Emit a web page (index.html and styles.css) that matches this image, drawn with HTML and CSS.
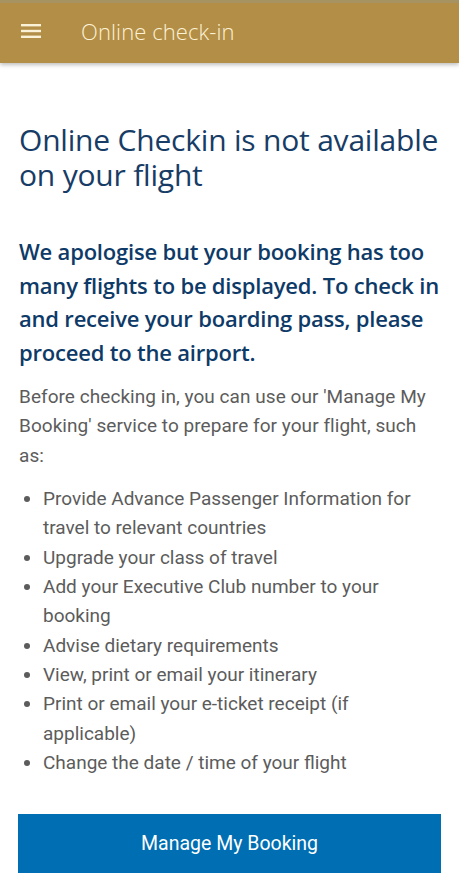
FILE: index.html
```html
<!DOCTYPE html>
<html lang="en">
<head>
<meta charset="utf-8">
<title>Online check-in</title>
<link rel="stylesheet" href="styles.css">
</head>
<body>
<header class="appbar">
  <span class="menu" aria-label="Menu">
    <svg width="20" height="14" viewBox="0 0 20 14"><rect x="0" y="0" width="20" height="2.4" fill="#fbf1d6"/><rect x="0" y="5.8" width="20" height="2.4" fill="#fbf1d6"/><rect x="0" y="11.6" width="20" height="2.4" fill="#fbf1d6"/></svg>
  </span>
  <h1 class="appbar-title">Online check-in</h1>
</header>
<main class="content">
  <h2 class="title">Online Checkin is not available on your flight</h2>
  <p class="lead">We apologise but your booking has too many flights to be displayed. To check in and receive your boarding pass, please proceed to the airport.</p>
  <p class="body">Before checking in, you can use our 'Manage My Booking' service to prepare for your flight, such as:</p>
  <ul class="list">
    <li>Provide Advance Passenger Information for travel to relevant countries</li>
    <li>Upgrade your class of travel</li>
    <li>Add your Executive Club number to your booking</li>
    <li>Advise dietary requirements</li>
    <li>View, print or email your itinerary</li>
    <li>Print or email your e-ticket receipt (if applicable)</li>
    <li>Change the date / time of your flight</li>
  </ul>
  <button class="btn" type="button">Manage My Booking</button>
</main>
</body>
</html>
```
FILE: styles.css
```css
* { box-sizing: border-box; }
html, body { margin: 0; padding: 0; background: #fff; }
body { width: 459px; overflow: hidden; font-family: Roboto, "Liberation Sans", sans-serif; }
.appbar {
  height: 63px;
  background: #b38e47;
  border-top: 3px solid #a79262;
  display: flex;
  align-items: center;
  padding-left: 21px;
  box-shadow: 0 2px 4px rgba(0,0,0,0.25);
}
.menu { display: flex; width: 20px; height: 14px; margin-top: -4px; }
.appbar-title {
  margin: -5px 0 0 40px;
  font-family: "Open Sans", sans-serif;
  font-weight: 300;
  font-size: 22px;
  color: #fcf2d6;
  letter-spacing: 0.1px;
}
.content { padding: 59px 18px 0 19px; }
.title {
  margin: 0;
  font-family: "Open Sans", sans-serif;
  font-weight: 400;
  font-size: 30px;
  line-height: 35px;
  color: #173c66;
  letter-spacing: -0.2px;
}
.lead {
  margin: 43px 0 0;
  font-family: "Open Sans", sans-serif;
  font-weight: 600;
  font-size: 22px;
  line-height: 33.5px;
  color: #0e3a68;
  letter-spacing: -0.2px;
}
.body {
  margin: 13px 0 0;
  font-size: 19px;
  line-height: 29.3px;
  color: #5c5c5c;
  letter-spacing: 0.05px;
}
.list {
  margin: 14px 0 0;
  padding-left: 24px;
  font-size: 19px;
  line-height: 29.35px;
  color: #5c5c5c;
}
.btn {
  display: block;
  width: 423px;
  height: 59px;
  margin: 37px 0 0 -1px;
  border: 0;
  background: #006eb2;
  color: #fff;
  font-family: Roboto, sans-serif;
  font-size: 19.5px;
}
```
